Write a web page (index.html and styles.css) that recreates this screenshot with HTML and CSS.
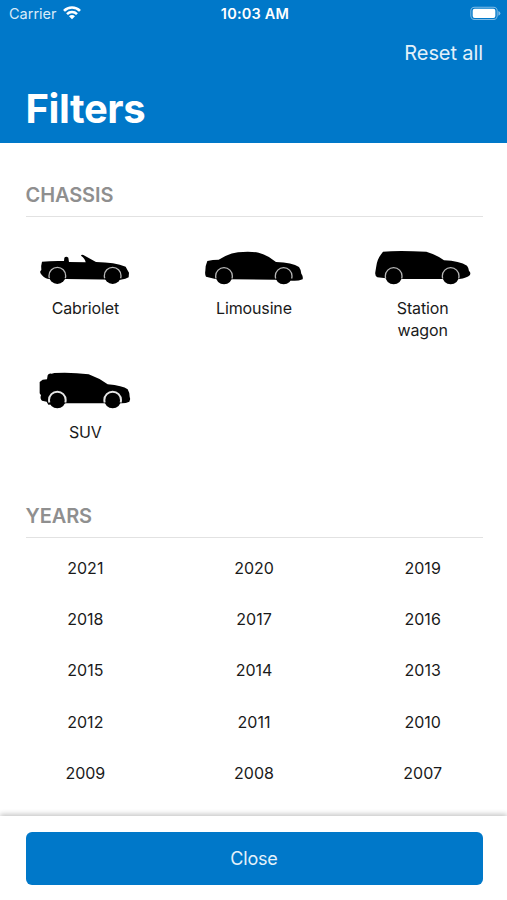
FILE: index.html
```html
<!DOCTYPE html>
<html lang="en">
<head>
  <meta charset="UTF-8" />
  <meta name="viewport" content="width=device-width, initial-scale=1.0" />
  <title>Filters</title>
  <link rel="stylesheet" href="styles.css">
</head>
<body>
  <div class="screen">
    <header class="header">
      <div class="status-bar">
        <div class="carrier">
          <span>Carrier</span>
          <svg class="wifi" viewBox="0 0 54 44">
            <path d="M27 43 L18 34 A12.500 12.500 0 0 1 36 34 Z" fill="#fff" />
            <path d="M12 27.500 A21 21 0 0 1 42 27.500" fill="none" stroke="#fff" stroke-width="7.500" />
            <path d="M3 17.500 A34 34 0 0 1 51 17.500" fill="none" stroke="#fff" stroke-width="8" />
          </svg>
        </div>
        <span class="time">10:03 AM</span>
        <svg class="battery" viewBox="0 0 92 44">
          <rect x="2.500" y="3.500" width="79" height="37" rx="11" fill="none" stroke="#7fbbe5" stroke-width="3" />
          <rect x="8" y="8" width="68" height="28" rx="6" fill="#fff" />
          <path d="M85 15 Q91 17 91 22 Q91 27 85 29 Z" fill="#7fbbe5" />
        </svg>
      </div>
      <div class="actions"><a class="reset">Reset all</a></div>
      <h1>Filters</h1>
    </header>

    <main class="content">
      <!-- Chassis -->
      <section>
        <h2>Chassis</h2>
        <div class="grid cars">
          <div class="car">
            <svg viewBox="-3 0 336 150">
              <path d="M36 65 Q65 62 102 63 L103 53 Q109 48 115 53 L117 66 L167 67 Q166 56 153 47 Q154 43 160 45 L198 66 Q255 67 287 80 Q291 88 297 98 L296 112 Q288 118 272 119 L107 117 L55 117 Q40 114 31 99 Q29 93 34 90 Q32 78 36 65 Z" />
              <circle class="wheel" pathLength="100" cx="82" cy="107" r="25" />
              <circle class="wheel" pathLength="100" cx="248" cy="107" r="25" />
            </svg>
            <span>Cabriolet</span>
          </div>
          <div class="car">
            <svg viewBox="0 0 336 150">
              <path d="M28 63 Q44 59 62 59 Q92 40 120 37 Q155 33 182 38 Q213 47 234 66 Q283 68 303 81 Q309 89 310 101 Q316 108 314 118 Q298 124 282 122 L232 119 L100 118 L52 117 L24 110 Q20 104 22 92 Q22 76 28 63 Z" />
              <circle class="wheel" pathLength="100" cx="78" cy="108" r="25" />
              <circle class="wheel" pathLength="100" cx="257" cy="108" r="25" />
            </svg>
            <span>Limousine</span>
          </div>
          <div class="car">
            <svg viewBox="3 0 336 150">
              <path d="M51 35 Q95 31 181 35 Q213 45 234 61 Q281 63 303 77 Q309 85 309 93 Q315 97 312 105 Q302 114 280 117 L106 117 L60 115 L34 112 Q26 107 28 96 L31 78 Q34 57 46 42 Z" />
              <circle class="wheel" pathLength="100" cx="83" cy="108" r="25" />
              <circle class="wheel" pathLength="100" cx="254" cy="108" r="25" />
            </svg>
            <span>Station wagon</span>
          </div>
          <div class="car">
            <svg viewBox="-3 0 336 150">
              <path d="M53 34 Q56 27 65 29 L73 27 Q125 24 176 31 Q207 42 233 61 Q278 65 293 76 Q299 86 299 98 Q303 106 298 113 Q288 118 276 118 L110 118 L55 122 L50 113 L36 110 Q29 104 33 94 L29 88 L29 54 L38 47 L51 46 Z" />
              <circle class="wheel thick" pathLength="100" cx="82" cy="108" r="25" />
              <circle class="wheel thick" pathLength="100" cx="248" cy="108" r="25" />
            </svg>
            <span>SUV</span>
          </div>
        </div>
      </section>

      <!-- Years -->
      <section>
        <h2>Years</h2>
        <div class="grid years">
          <span>2021</span>
          <span>2020</span>
          <span>2019</span>
          <span>2018</span>
          <span>2017</span>
          <span>2016</span>
          <span>2015</span>
          <span>2014</span>
          <span>2013</span>
          <span>2012</span>
          <span>2011</span>
          <span>2010</span>
          <span>2009</span>
          <span>2008</span>
          <span>2007</span>
        </div>
      </section>
    </main>

    <footer class="footer">
      <button>Close</button>
    </footer>
  </div>
</body>
</html>
```
FILE: styles.css
```css
* { box-sizing: border-box; }
body { margin: 0; font-family: Inter, "Liberation Sans", sans-serif; font-size: 16px; color: #1a1a1a; background: #fff; }
.screen { display: flex; flex-direction: column; height: 900px; overflow: hidden; }

.header { height: 142.5px; flex: none; background: #0078c9; color: #fff; }
.status-bar { display: grid; grid-template-columns: 1fr auto 1fr; align-items: center; height: 27px; padding: 0 6px 0 9px; font-size: 14.5px; }
.carrier { display: flex; align-items: center; gap: 6px; color: #d9ebf8; }
.wifi { width: 18px; height: 14.7px; margin-top: -2px; }
.time { font-weight: 600; letter-spacing: 0.2px; }
.battery { width: 30.7px; height: 14.7px; justify-self: end; }
.actions { display: flex; justify-content: flex-end; padding: 12px 24px 0; }
.reset { font-size: 20px; line-height: 28px; letter-spacing: -0.1px; color: #e3f1fa; }
h1 { margin: 17px 25.5px 0; font-size: 40px; line-height: 50px; font-weight: 700; letter-spacing: -0.4px; }

.content { flex: 1; min-height: 0; overflow: hidden; }
h2 { margin: 0 24.5px 0 25.5px; padding-bottom: 8px; border-bottom: 1.5px solid #e2e2e2; font-size: 20px; line-height: 26px; font-weight: 600; letter-spacing: -0.1px; color: #8f8f8f; text-transform: uppercase; }
section { padding-top: 39.5px; }
.grid { display: grid; grid-template-columns: repeat(3, 1fr); padding-left: 1px; text-align: center; }

.cars { padding-top: 23px; padding-bottom: 20px; row-gap: 23px; }
.car { display: flex; flex-direction: column; align-items: center; gap: 7px; line-height: 22px; letter-spacing: -0.15px; }
.car svg { width: 112px; height: 50px; fill: #000; }
.car span { max-width: 90px; }
/* only the upper part of the wheel arch is outlined */
.wheel { stroke: #b5b5b5; stroke-width: 4; stroke-dasharray: 60 40; stroke-dashoffset: -45; }
.thick { stroke: #e6e6e6; stroke-width: 6; }

.years { padding-top: 5px; line-height: 51.4px; }

.footer { position: relative; flex: none; height: 84px; padding: 16px 24.5px 0 25.5px; background: #fff; box-shadow: 0 -2px 5px rgba(0, 0, 0, 0.22); }
button { display: block; width: 100%; height: 53px; border: none; border-radius: 6px; background: #0078c9; color: #e3f1fa; font-family: inherit; font-size: 18px; letter-spacing: -0.2px; }
```
